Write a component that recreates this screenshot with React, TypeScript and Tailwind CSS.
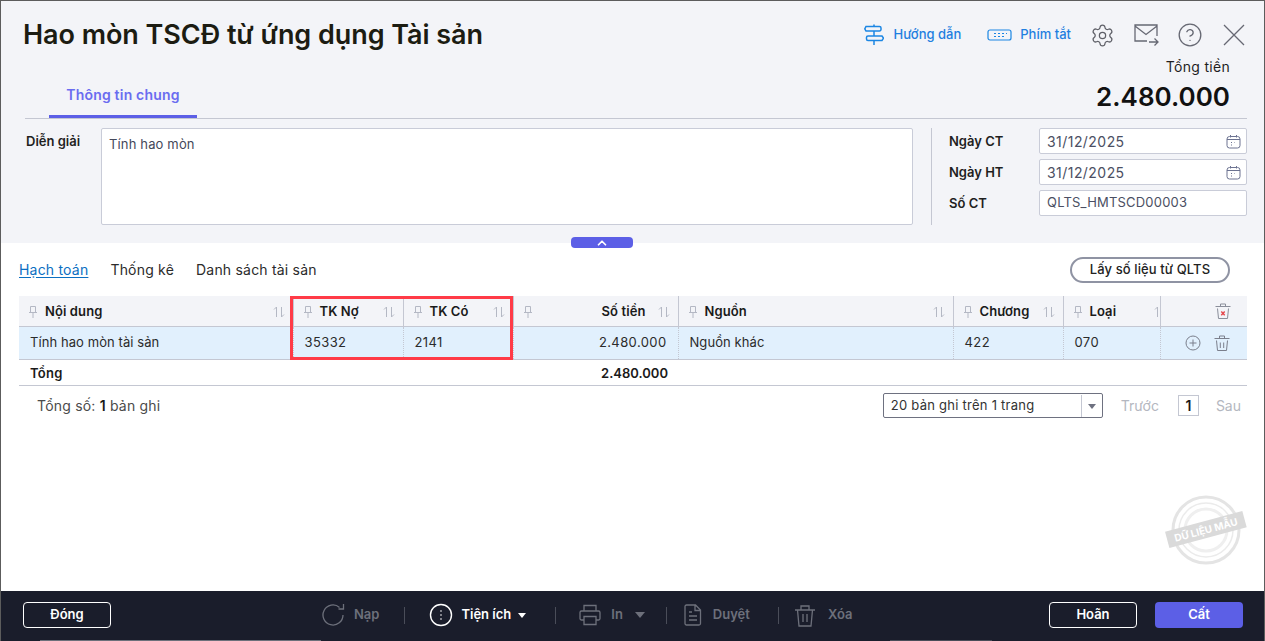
import { ChevronUp, Settings, CircleHelp } from "lucide-react";

function PinIcon() {
  return (
    <svg width="10" height="14" viewBox="0 0 10 14" fill="none" stroke="#b4b8c4" strokeWidth="1" className="shrink-0">
      <path d="M2.5 1.5h5v6h-5zM1 7.5h8M5 7.5v5.5" />
    </svg>
  );
}

function SortIcon() {
  return (
    <svg width="12" height="12" viewBox="0 0 12 12" fill="none" stroke="#b4b8c4" strokeWidth="1" className="shrink-0">
      <path d="M3.5 11V1L1 3.5M8.5 1v10L11 8.5" />
    </svg>
  );
}

function CalendarIcon() {
  return (
    <svg width="15" height="15" viewBox="0 0 15 15" fill="none" stroke="#6c7391" strokeWidth="1">
      <rect x="1" y="2.5" width="13" height="11.5" rx="2.5" />
      <path d="M1 5.5h13M4.5 1v2.5M10.5 1v2.5M5 8.500h1M8 8.500h.5M5 11h1" />
    </svg>
  );
}

function TrashIcon({ color = "#7b7f8c", red = false }: { color?: string; red?: boolean }) {
  return (
    <svg width="18" height="18" viewBox="0 0 18 18" fill="none" stroke={color} strokeWidth="1">
      <path d="M1.5 4.500h15M6.500 4.500V2h5v2.500M3.500 6.500l1 10h9l1-10" />
      {red ? <path d="M7.300 9.500l3.400 3.800M10.700 9.500l-3.400 3.800" stroke="#e5484d" strokeWidth="1.400" /> : <path d="M7.300 8.500v5.500M10.700 8.500v5.500" />}
    </svg>
  );
}

function HeaderCell({ label, right = false, clipSort = false }: { label: string; right?: boolean; clipSort?: boolean }) {
  return (
    <th className="h-[30px] overflow-hidden border-r border-b border-[#c4c7d2] bg-[#f3f4f8] p-0 font-semibold">
      <div className={`flex items-center pl-[9px] pt-[2px] ${clipSort ? "pr-0" : "pr-[8px]"}`}>
        <PinIcon />
        <span className={`text-[13px] tracking-[0.1px] text-[#1a1a1a] ${right ? "ml-auto mr-[12px]" : "ml-[7px] mr-auto"}`}>{label}</span>
        {clipSort ? (
          <span className="w-[6px] overflow-hidden">
            <SortIcon />
          </span>
        ) : (
          <SortIcon />
        )}
      </div>
    </th>
  );
}

function Td({ children, right = false, num = false }: { children: React.ReactNode; right?: boolean; num?: boolean }) {
  return (
    <td className={`h-[33px] border-r border-dotted border-[#c4c7d2] px-[11px] py-0 text-[13px] font-normal text-[#2b2b2b] ${num ? "tracking-[0.4px]" : "tracking-[0.08px]"} ${right ? "text-right" : "text-left"}`}>
      {children}
    </td>
  );
}

function DateField({ label, value, icon = true }: { label: string; value: string; icon?: boolean }) {
  return (
    <div className="flex h-[26px] items-center">
      <span className="w-[90px] pt-[2px] text-[13px] font-semibold text-[#1f1f1f]">{label}</span>
      <div className={`flex h-[26px] w-[208px] items-center justify-between rounded-[2px] border border-[#c9ccd8] bg-white pl-[7px] pr-[5px] text-[#4b4f63] ${icon ? "text-[14px] tracking-[0.45px]" : "text-[13px] tracking-[0.2px]"}`}>
        {value}
        {icon && <CalendarIcon />}
      </div>
    </div>
  );
}

function Divider({ className }: { className: string }) {
  return <span className={`h-[17px] w-px bg-[#4a4d59] ${className}`} />;
}

export default function App() {
  return (
    <div className="relative flex h-[641px] w-[1265px] flex-col overflow-hidden border-x border-t border-[#5c5c5c] bg-white [font-family:Inter,sans-serif]">
      {/* Top panel */}
      <div className="relative h-[242px] shrink-0 bg-[#f3f4f8]">
        <div className="flex h-[36px] translate-y-[16px] items-center pl-[22px]">
          <h1 className="text-[27px] font-semibold tracking-[-0.05px] text-[#1c1c12]">Hao mòn TSCĐ từ ứng dụng Tài sản</h1>
          <div className="ml-auto mr-[19px] flex items-center text-[13px] font-medium text-[#1f7fe0]">
            <svg width="20" height="22" viewBox="0 0 20 22" fill="none" stroke="#1c86e3" strokeWidth="1.500">
              <path d="M2 2.500h13.500a1.500 1.500 0 0 1 1.500 1.500v1.500a1.500 1.500 0 0 1-1.500 1.500H2L.8 4.800zM4 12h14l1.500 2.200L18 16.500H4a1.500 1.500 0 0 1-1.500-1.500v-1.500A1.500 1.500 0 0 1 4 12zM10 .5V2.500M10 7v5M10 16.500V21" />
            </svg>
            <span className="ml-[9px]">Hướng dẫn</span>
            <svg width="25" height="12" viewBox="0 0 25 12" fill="none" stroke="#1c86e3" strokeWidth="1.200" className="ml-[26px]">
              <rect x="1" y="1" width="23" height="10" rx="2" />
              <path d="M7 4.500h2M11 4.500h2M15 4.500h2M19 4.500h1M7 7.500h2M11 7.500h2M15 7.500h2" />
            </svg>
            <span className="ml-[8px]">Phím tắt</span>
            <Settings size={25} strokeWidth={1.200} color="#5f6068" className="ml-[19px]" />
            <svg width="26" height="24" viewBox="0 0 26 24" fill="none" stroke="#666873" strokeWidth="1.300" className="ml-[18px]">
              <path d="M14 18H2V2h22v11M2 3l11 8.500L24 3M16 19h9M21.500 15.500L25 19l-3.500 3.500" />
            </svg>
            <CircleHelp size={26} strokeWidth={1.200} color="#666873" className="ml-[18px]" />
            <svg width="22" height="22" viewBox="0 0 22 22" fill="none" stroke="#666873" strokeWidth="1.300" className="ml-[20px]">
              <path d="M1 1l20 20M21 1L1 21" />
            </svg>
          </div>
        </div>

        {/* Tab strip with the total on the right */}
        <div className="ml-[24px] mr-[17px] flex h-[67px] translate-y-[15px] items-end justify-between border-b border-[#c4c7d2]">
          <div className="ml-[24px] flex h-[38px] w-[148px] items-center justify-center border-b-[3px] border-[#5c5fe6] pb-[7px] text-[14px] font-semibold tracking-[0.2px] text-[#6a6cf0]">
            Thông tin chung
          </div>
          <div className="mr-[17px] flex flex-col items-end pb-[5px]">
            <span className="text-[14px] leading-[18px] tracking-[0.3px] text-[#1f1f1f]">Tổng tiền</span>
            <span className="mt-[5px] text-[26px] font-semibold leading-[32px] text-[#111]">2.480.000</span>
          </div>
        </div>

        {/* Description and document fields */}
        <div className="mt-[24px] flex pl-[25px] pr-[17px]">
          <span className="w-[75px] pt-[4px] text-[13px] font-semibold text-[#1f1f1f]">Diễn giải</span>
          <div className="h-[97px] w-[812px] rounded-[2px] border border-[#c9ccd8] bg-white px-[7px] py-[6px] text-[13px] leading-[18px] tracking-[0.15px] text-[#44485a]">
            Tính hao mòn
          </div>
          <div className="ml-auto flex h-[97px] w-[316px] flex-col gap-[5px] border-l border-[#c4c7d2] pl-[17px]">
            <DateField label="Ngày CT" value="31/12/2025" />
            <DateField label="Ngày HT" value="31/12/2025" />
            <DateField label="Số CT" value="QLTS_HMTSCD00003" icon={false} />
          </div>
        </div>

        <div className="absolute left-[570px] top-[236px] z-10 flex h-[11px] w-[62px] items-center justify-center rounded-[4px] bg-[#5c5fe6] text-white">
          <ChevronUp size={14} strokeWidth={3} />
        </div>
      </div>

      {/* Detail area */}
      <div className="relative min-h-0 flex-1 pl-[18px] pr-[17px]">
        <div className="mt-[14px] flex h-[26px] items-center">
          <div className="flex gap-[22px] pb-[2px] text-[14px] tracking-[0.2px] text-[#2b2b2b]">
            <span className="text-[#0b6fc2] underline underline-offset-2">Hạch toán</span>
            <span>Thống kê</span>
            <span>Danh sách tài sản</span>
          </div>
          <div className="mr-[17px] ml-auto flex h-[26px] w-[160px] items-center justify-center rounded-full border-2 border-[#8f93a3] bg-white text-[13px] font-medium tracking-[0.1px] text-[#222]">
            Lấy số liệu từ QLTS
          </div>
        </div>

        <div className="relative mt-[13px]">
          <table className="w-[1228px] table-fixed border-collapse">
            <colgroup>
              <col className="w-[274px]" />
              <col className="w-[110px]" />
              <col className="w-[110px]" />
              <col className="w-[165px]" />
              <col className="w-[275px]" />
              <col className="w-[110px]" />
              <col className="w-[97px]" />
              <col className="w-[87px]" />
            </colgroup>
            <thead>
              <tr>
                <HeaderCell label="Nội dung" />
                <HeaderCell label="TK Nợ" />
                <HeaderCell label="TK Có" />
                <HeaderCell label="Số tiền" right />
                <HeaderCell label="Nguồn" />
                <HeaderCell label="Chương" />
                <HeaderCell label="Loại" clipSort />
                <th className="h-[30px] border-b border-[#c4c7d2] bg-[#f3f4f8] p-0">
                  <div className="flex justify-end pr-[15px]">
                    <TrashIcon red color="#8a8e9a" />
                  </div>
                </th>
              </tr>
            </thead>
            <tbody>
              <tr className="border-b border-[#c4c7d2] bg-[#e1f0fd]">
                <Td>Tính hao mòn tài sản</Td>
                <Td num>35332</Td>
                <Td num>2141</Td>
                <Td right num>2.480.000</Td>
                <Td>Nguồn khác</Td>
                <Td num>422</Td>
                <Td num>070</Td>
                <td className="p-0">
                  <div className="flex items-center justify-end gap-[12px] pr-[16px]">
                    <svg width="16" height="16" viewBox="0 0 16 16" fill="none" stroke="#7b7f8c" strokeWidth="1">
                      <circle cx="8" cy="8" r="7" />
                      <path d="M8 4.500v7M4.500 8h7" />
                    </svg>
                    <TrashIcon />
                  </div>
                </td>
              </tr>
              <tr className="border-b border-[#c4c7d2]">
                <td className="h-[26px] px-[11px] pb-0 pt-[4px] text-[13px] font-semibold tracking-[0.3px] text-[#1a1a1a]">Tổng</td>
                <td />
                <td />
                <td className="pb-0 pl-[11px] pr-[10px] pt-[4px] text-right text-[13px] font-semibold text-[#1a1a1a]">2.480.000</td>
                <td colSpan={4} />
              </tr>
            </tbody>
          </table>
          {/* Red highlight over the two account columns */}
          <div className="absolute left-[271px] top-0 h-[64px] w-[223px] border-[3px] border-[#ff3b47]" />
        </div>

        {/* Pager */}
        <div className="mt-[1px] flex h-[38px] items-center">
          <span className="ml-[18px] text-[14px] tracking-[0.2px] text-[#4b4b4b]">
            Tổng số: <b className="font-semibold text-[#1a1a1a]">1</b> bản ghi
          </span>
          <div className="ml-auto flex h-[25px] w-[220px] items-center rounded-[2px] border border-[#6e7180] bg-white pt-[1px] text-[13px] tracking-[0.25px] text-[#333]">
            <span className="flex-1 pl-[7px]">20 bản ghi trên 1 trang</span>
            <span className="flex h-full w-[21px] items-center justify-center border-l border-[#c4c7d2]">
              <span className="h-0 w-0 border-x-[4px] border-t-[5px] border-x-transparent border-t-[#6e7180]" />
            </span>
          </div>
          <span className="ml-[18px] text-[14px] text-[#b4b7c0]">Trước</span>
          <span className="ml-[19px] flex h-[21px] w-[21px] items-center justify-center border border-[#c4c7d2] text-[14px] font-semibold text-[#1a1a1a]">1</span>
          <span className="ml-[17px] mr-[6px] text-[14px] text-[#b4b7c0]">Sau</span>
        </div>

        {/* Sample data stamp */}
        <svg width="84" height="80" viewBox="0 0 84 80" className="absolute bottom-[21px] right-[16px]" fill="none">
          <circle cx="42" cy="40" r="33" stroke="#e4e4e4" strokeWidth="3" />
          <circle cx="42" cy="40" r="27" stroke="#ebebeb" strokeWidth="1.500" />
          <circle cx="42" cy="40" r="21" stroke="#efefef" strokeWidth="3" />
          <g transform="rotate(-15 42 40)">
            <rect x="2" y="31" width="80" height="17" fill="#dadada" />
            <text x="42" y="43.500" textAnchor="middle" fontSize="10" fontWeight="700" fill="#ffffff">DỮ LIỆU MẪU</text>
          </g>
        </svg>
      </div>

      {/* Footer */}
      <div className="relative flex h-[50px] shrink-0 items-center bg-[#1a1d2b] pb-[2px] text-[13px] font-semibold text-[#6d707b]">
        <div className="ml-[22px] flex h-[26px] w-[88px] items-center justify-center rounded-[4px] border border-white text-white">Đóng</div>

        <svg width="24" height="24" viewBox="0 0 24 24" fill="none" stroke="#6d707b" strokeWidth="1.300" className="ml-[211px]">
          <path d="M21 12a10 10 0 1 1-3.500-7.600M21.500 1v5h-5" />
        </svg>
        <span className="ml-[8px]">Nạp</span>
        <Divider className="ml-[25px]" />
        <svg width="24" height="24" viewBox="0 0 24 24" fill="none" stroke="#ffffff" strokeWidth="1.400" className="ml-[24px]">
          <circle cx="12" cy="12" r="10.500" />
          <path d="M12 7.500v1M12 11.500v1M12 15.500v1" strokeWidth="1.800" />
        </svg>
        <span className="ml-[8px] text-white">Tiện ích</span>
        <span className="ml-[7px] h-0 w-0 border-x-[4px] border-t-[5px] border-x-transparent border-t-white" />
        <Divider className="ml-[29px]" />
        <svg width="22" height="22" viewBox="0 0 22 22" fill="none" stroke="#6d707b" strokeWidth="1.300" className="ml-[23px]">
          <path d="M5 7V1.500h12V7M5 16H2.500A1.500 1.500 0 0 1 1 14.500v-6A1.500 1.500 0 0 1 2.500 7h17A1.500 1.500 0 0 1 21 8.500v6a1.500 1.500 0 0 1-1.500 1.500H17M5 12.500h12V20.500H5z" />
        </svg>
        <span className="ml-[10px]">In</span>
        <span className="ml-[12px] h-0 w-0 border-x-[5px] border-t-[6px] border-x-transparent border-t-[#6d707b]" />
        <Divider className="ml-[21px]" />
        <svg width="18" height="22" viewBox="0 0 18 22" fill="none" stroke="#6d707b" strokeWidth="1.300" className="ml-[17px]">
          <path d="M2.500 1h9l5 5v13.500a1.500 1.500 0 0 1-1.500 1.500H2.500A1.500 1.500 0 0 1 1 19.500v-17A1.500 1.500 0 0 1 2.500 1zM11 1v5.500h5.500M5 8h3M5 12h8M5 16h8" />
        </svg>
        <span className="ml-[11px]">Duyệt</span>
        <Divider className="ml-[28px]" />
        <svg width="22" height="23" viewBox="0 0 22 23" fill="none" stroke="#6d707b" strokeWidth="1.300" className="ml-[15px]">
          <path d="M1 6h20M7 6V2h8v4M3.500 6l1.500 16h12l1.500-16M9 10v8M13 10v8" />
        </svg>
        <span className="ml-[12px]">Xóa</span>

        <div className="ml-auto flex h-[26px] w-[88px] items-center justify-center rounded-[4px] border border-white text-white">Hoãn</div>
        <div className="ml-[18px] mr-[21px] flex h-[26px] w-[88px] items-center justify-center rounded-[4px] bg-[#5c5fe6] text-white">Cất</div>

        <div className="absolute bottom-0 left-[39px] h-px w-[281px] bg-[#6d707b]" />
        <div className="absolute bottom-0 left-[889px] h-px w-[102px] bg-[#4a4d59]" />
      </div>
    </div>
  );
}
